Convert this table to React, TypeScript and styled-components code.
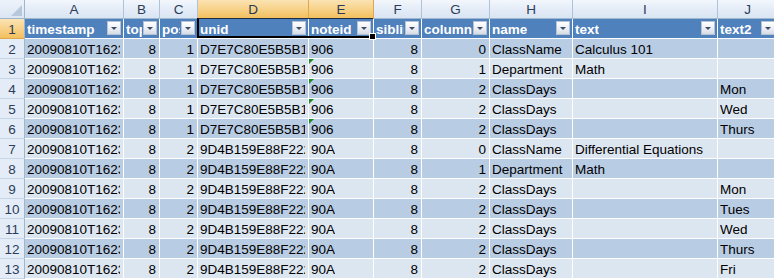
import React from 'react';
import styled, { createGlobalStyle, css } from 'styled-components';

const GlobalStyle = createGlobalStyle`
  html, body {
    margin: 0;
    padding: 0;
    background: #ffffff;
    overflow: hidden;
  }
`;

// column widths in px, row header first
const COLS = [25, 99, 36, 38, 111, 65, 48, 68, 83, 145, 60];
const LETTERS = ['A', 'B', 'C', 'D', 'E', 'F', 'G', 'H', 'I', 'J'];
const SELECTED_COLS = ['D', 'E'];

const FIELDS = ['timestamp', 'top', 'pos', 'unid', 'noteid', 'sibling', 'column', 'name', 'text', 'text2'];
const NUMERIC = [false, true, true, false, false, true, true, false, false, false];

const UNID_1 = 'D7E7C80E5B5B138A8525761000525D1E';
const UNID_2 = '9D4B159E88F222C08525761000525D20';
const STAMP = '20090810T162300,00-04';

const rows: (string | number)[][] = [
  [STAMP, 8, 1, UNID_1, '906', 8, 0, 'ClassName', 'Calculus 101', ''],
  [STAMP, 8, 1, UNID_1, '906', 8, 1, 'Department', 'Math', ''],
  [STAMP, 8, 1, UNID_1, '906', 8, 2, 'ClassDays', '', 'Mon'],
  [STAMP, 8, 1, UNID_1, '906', 8, 2, 'ClassDays', '', 'Wed'],
  [STAMP, 8, 1, UNID_1, '906', 8, 2, 'ClassDays', '', 'Thurs'],
  [STAMP, 8, 2, UNID_2, '90A', 8, 0, 'ClassName', 'Differential Equations', ''],
  [STAMP, 8, 2, UNID_2, '90A', 8, 1, 'Department', 'Math', ''],
  [STAMP, 8, 2, UNID_2, '90A', 8, 2, 'ClassDays', '', 'Mon'],
  [STAMP, 8, 2, UNID_2, '90A', 8, 2, 'ClassDays', '', 'Tues'],
  [STAMP, 8, 2, UNID_2, '90A', 8, 2, 'ClassDays', '', 'Wed'],
  [STAMP, 8, 2, UNID_2, '90A', 8, 2, 'ClassDays', '', 'Thurs'],
  [STAMP, 8, 2, UNID_2, '90A', 8, 2, 'ClassDays', '', 'Fri'],
];

const Sheet = styled.div`
  display: grid;
  grid-template-columns: ${COLS.map((w) => `${w}px`).join(' ')};
  grid-template-rows: 19px repeat(13, 20px);
  width: 774px;
  height: 279px;
  overflow: hidden;
  font-family: 'Liberation Sans', Arial, sans-serif;
  font-size: 13.5px;
  color: #000;
`;

const orange = css`
  background: linear-gradient(#fbe3b3, #f8d48e 45%, #f2c05e);
  color: #2a3a55;
`;

const Corner = styled.div`
  position: relative;
  box-sizing: border-box;
  background: linear-gradient(#eef3fa, #dbe6f3);
  border-right: 1px solid #9eb6ce;
  border-bottom: 1px solid #9eb6ce;

  &::after {
    content: '';
    position: absolute;
    right: 2px;
    bottom: 2px;
    border-left: 11px solid transparent;
    border-bottom: 11px solid #b8c8dc;
  }
`;

const ColHeader = styled.div<{ $selected?: boolean }>`
  box-sizing: border-box;
  display: flex;
  align-items: center;
  justify-content: center;
  padding-top: 1px;
  background: linear-gradient(#f3f7fc, #e4ecf7 50%, #dae5f3);
  color: #2b3d58;
  border-right: 1px solid #aec3da;
  border-bottom: 1px solid #9eb6ce;
  ${({ $selected }) =>
    $selected &&
    css`
      ${orange};
      border-right-color: #e0a84c;
      border-bottom-color: #d79a3a;
    `}
`;

const RowHeader = styled.div<{ $selected?: boolean }>`
  box-sizing: border-box;
  display: flex;
  align-items: center;
  justify-content: center;
  padding-top: 1px;
  background: #e4ecf7;
  color: #2b3d58;
  border-right: 1px solid #9eb6ce;
  border-bottom: 1px solid #c5d5e8;
  ${({ $selected }) =>
    $selected &&
    css`
      ${orange};
      border-bottom-color: #e0a84c;
    `}
`;

const HeadCell = styled.div`
  position: relative;
  box-sizing: border-box;
  display: flex;
  align-items: center;
  padding: 1px 17px 0 2px;
  background: #4f81bd;
  color: #ffffff;
  font-weight: bold;
  white-space: nowrap;
  overflow: hidden;
  border-right: 1px solid #ffffff;
  border-bottom: 1px solid #ffffff;
`;

const FilterButton = styled.span`
  position: absolute;
  right: 2px;
  top: 2px;
  box-sizing: border-box;
  width: 14px;
  height: 14px;
  background: linear-gradient(#ffffff, #e9edf3 60%, #d6dce6);
  border: 1px solid #b7c2d2;
  display: flex;
  align-items: center;
  justify-content: center;

  &::after {
    content: '';
    border-left: 3px solid transparent;
    border-right: 3px solid transparent;
    border-top: 3px solid #3f4c66;
    margin-top: 1px;
  }
`;

const Cell = styled.div<{ $band: boolean; $numeric?: boolean }>`
  position: relative;
  box-sizing: border-box;
  display: flex;
  align-items: center;
  justify-content: ${({ $numeric }) => ($numeric ? 'flex-end' : 'flex-start')};
  padding: 1px 3px 0 2px;
  background: ${({ $band }) => ($band ? '#b8cce4' : '#dce6f1')};
  white-space: nowrap;
  overflow: hidden;
  border-right: 1px solid #ffffff;
  border-bottom: 1px solid #ffffff;
`;

const Value = styled.span`
  display: block;
  min-width: 0;
  overflow: hidden;
`;

const ErrorMark = styled.span`
  position: absolute;
  left: 0;
  top: 0;
  border-top: 5px solid #1e8a2a;
  border-right: 5px solid transparent;
`;

const Selection = styled.span`
  position: absolute;
  left: -1px;
  top: -1px;
  width: 176px;
  height: 20px;
  box-sizing: border-box;
  border-left: 2px solid #000;
  border-bottom: 2px solid #000;
  border-top: 1px solid #1d2b44;
  pointer-events: none;
  z-index: 2;

  &::after {
    content: '';
    position: absolute;
    right: -3px;
    bottom: -4px;
    width: 5px;
    height: 5px;
    background: #000;
    border: 1px solid #fff;
  }
`;

const SelectedHead = styled(HeadCell)`
  overflow: visible;
  z-index: 2;
`;

export default function App() {
  return (
    <>
      <GlobalStyle />
      <Sheet>
        <Corner />
        {LETTERS.map((l) => (
          <ColHeader key={l} $selected={SELECTED_COLS.includes(l)}>
            {l}
          </ColHeader>
        ))}

        <RowHeader $selected>1</RowHeader>
        {FIELDS.map((f, i) =>
          i === 3 ? (
            <SelectedHead key={f}>
              <Value>{f}</Value>
              <FilterButton />
              <Selection />
            </SelectedHead>
          ) : (
            <HeadCell key={f}>
              <Value>{f}</Value>
              <FilterButton />
            </HeadCell>
          )
        )}

        {rows.map((row, r) => (
          <React.Fragment key={r}>
            <RowHeader>{r + 2}</RowHeader>
            {row.map((v, c) => (
              <Cell key={c} $band={r % 2 === 0} $numeric={NUMERIC[c]}>
                {c === 4 && r >= 1 && r <= 4 && <ErrorMark />}
                <Value>{v}</Value>
              </Cell>
            ))}
          </React.Fragment>
        ))}
      </Sheet>
    </>
  );
}
